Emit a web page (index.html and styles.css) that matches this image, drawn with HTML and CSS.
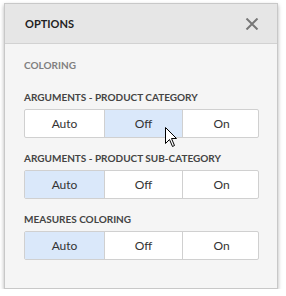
FILE: index.html
```html
<!DOCTYPE html>
<html>
<head>
  <title>Options</title>
  <link rel="stylesheet" href="styles.css">
</head>
<body>
  <div id="panel">
    <div id="header">
      <div id="header-title">OPTIONS</div>
      <svg id="close-button" width="14" height="12" viewBox="0 0 14 12">
        <path d="M1.5 0.5 L12.5 11.5 M12.5 0.5 L1.5 11.5" stroke="#777" stroke-width="2" fill="none"/>
      </svg>
    </div>
    <div id="content">
      <div class="section-title">COLORING</div>
      <div class="group-label">ARGUMENTS - PRODUCT CATEGORY</div>
      <div class="button-group">
        <div class="group-button">Auto</div>
        <div class="group-button selected">Off</div>
        <div class="group-button">On</div>
      </div>
      <div class="group-label">ARGUMENTS - PRODUCT SUB-CATEGORY</div>
      <div class="button-group">
        <div class="group-button selected">Auto</div>
        <div class="group-button">Off</div>
        <div class="group-button">On</div>
      </div>
      <div class="group-label">MEASURES COLORING</div>
      <div class="button-group">
        <div class="group-button selected">Auto</div>
        <div class="group-button">Off</div>
        <div class="group-button">On</div>
      </div>
    </div>
  </div>
  <svg id="cursor" width="13" height="21" viewBox="0 0 13 21">
    <path d="M0.5 0.5 L0.5 16.5 L4.5 12.5 L7.5 19.5 L9.5 18.5 L6.5 11.5 L11.5 11.5 Z" fill="#fff" stroke="#000" stroke-width="1" stroke-linejoin="miter"/>
  </svg>
</body>
</html>
```

FILE: styles.css
```css
html, body {
  margin: 0;
  background-color: #fff;
  font-family: Lato, "Open Sans", sans-serif;
}
#panel {
  width: 272px;
  height: 284px;
  margin: 3px 0 0 4px;
  border: 1px solid #c8c8c8;
  background-color: #f5f5f5;
  box-shadow: 0 2px 4px rgba(0,0,0,0.3);
}
#header {
  display: flex;
  align-items: center;
  justify-content: space-between;
  height: 39px;
  padding: 0 18px 0 20px;
  background-color: #e6e6e6;
  border-bottom: 1px solid #d2d2d2;
}
#header-title {
  font-size: 11px;
  font-weight: bold;
  color: #222;
}
#close-button {
  display: block;
}
#content {
  padding: 14px 18px 0 19px;
}
.section-title {
  font-size: 10px;
  line-height: 14px;
  font-weight: bold;
  color: #808080;
  margin-bottom: 18px;
}
.group-label {
  font-size: 10px;
  line-height: 14px;
  font-weight: bold;
  color: #444;
  margin-bottom: 5px;
}
.button-group {
  display: grid;
  grid-template-columns: 79px 78px 78px;
  height: 29px;
  margin-bottom: 13px;
  box-sizing: border-box;
  border: 1px solid #d0d0d0;
  border-radius: 2px;
  background-color: #fff;
}
.group-button {
  display: flex;
  align-items: center;
  justify-content: center;
  font-size: 12px;
  color: #333;
  border-left: 1px solid #d0d0d0;
}
.group-button:first-child {
  border-left: 0;
}
.selected {
  background-color: #dae8fa;
}
#cursor {
  position: absolute;
  left: 165px;
  top: 127px;
}
```
